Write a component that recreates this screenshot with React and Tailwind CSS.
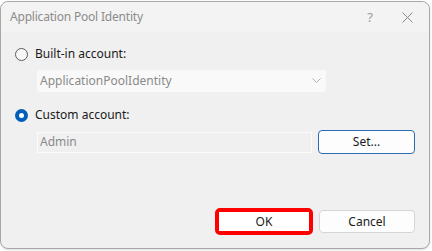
import React from "react";

const font = { fontFamily: '"Segoe UI", "Noto Sans", "Liberation Sans", sans-serif' };

function Radio({ checked }) {
  if (checked) {
    return (
      <span className="flex h-[13px] w-[13px] items-center justify-center rounded-full bg-[#005fb8]">
        <span className="h-[5px] w-[5px] rounded-full bg-white" />
      </span>
    );
  }
  return <span className="h-[13px] w-[13px] rounded-full border border-[#5c5c5c] bg-[#f7f7f7]" />;
}

export default function App() {
  return (
    <div className="relative h-[251px] w-[432px] overflow-hidden bg-white text-[12px] leading-[18px]" style={font}>
      <div className="mt-[1px] flex h-[248px] w-[430px] flex-col rounded-lg border border-[#a8a8a8] bg-[#f0f0f0] shadow-sm">
        {/* title bar */}
        <div className="flex h-[30px] items-center rounded-t-lg bg-[#f3f3f3] pl-[9px]">
          <span className="text-[12px] tracking-[-0.2px] text-[#8c8c8c]">Application Pool Identity</span>
          <span className="ml-auto mr-[29px] text-[13px] text-[#9a9a9a]">?</span>
          <svg width="11" height="11" viewBox="0 0 11 11" className="mr-[16px]">
            <path d="M0.5 0.5 L10.5 10.5 M10.5 0.5 L0.5 10.5" stroke="#8a8a8a" strokeWidth="1" fill="none" />
          </svg>
        </div>

        <div className="flex flex-1 flex-col pl-[14px] pr-[14px]">
          <div className="mt-[13px] flex items-center gap-[7px]">
            <Radio />
            <span className="text-[#1a1a1a]">Built-in account:</span>
          </div>
          <div className="ml-[22px] mt-[7px] flex h-[22px] w-[289px] items-center rounded-[3px] bg-[#f9f9f9] pl-[3px] pr-[5px] text-[#8a8a8a]">
            <span>ApplicationPoolIdentity</span>
            <svg width="9" height="6" viewBox="0 0 9 6" className="ml-auto">
              <path d="M0.5 0.5 L4.5 4.5 L8.5 0.5" stroke="#b0b0b0" strokeWidth="1" fill="none" />
            </svg>
          </div>

          <div className="mt-[14px] flex items-center gap-[7px]">
            <Radio checked />
            <span className="text-[#1a1a1a]">Custom account:</span>
          </div>
          <div className="ml-[22px] mt-[6px] flex items-center">
            <div className="flex h-[21px] w-[275px] items-center border border-[#fbfbfb] pl-[2px] text-[#8a8a8a]">Admin</div>
            <button className="ml-[6px] h-[24px] w-[97px] rounded-[4px] border border-[#2b6cb0] bg-[#fdfdfd] text-[#1a1a1a]">
              Set...
            </button>
          </div>

          <div className="mt-auto mb-[13px] flex items-center justify-end">
            <div className="mr-[6px] rounded-[5px] border-[4px] border-[#ff0000] p-0">
              <button className="h-[19px] w-[90px] bg-white text-[#1a1a1a]">OK</button>
            </div>
            <button className="h-[23px] w-[96px] rounded-[4px] border border-[#d5d5d5] bg-[#fdfdfd] text-[#1a1a1a]">
              Cancel
            </button>
          </div>
        </div>
      </div>
    </div>
  );
}
